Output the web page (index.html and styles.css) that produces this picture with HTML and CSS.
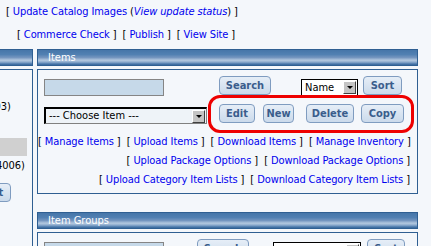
FILE: index.html
```html
<!DOCTYPE html>
<html>
<head>
<meta charset="utf-8">
<link rel="stylesheet" href="styles.css">
</head>
<body>
<div class="top">
  <div class="line1">[ <a class="lnk">Update Catalog Images</a> (<a class="lnk it">View update status</a>) ]</div>
  <div class="line2">[ <a class="lnk">Commerce Check</a> ] <span class="sp"></span>[ <a class="lnk">Publish</a> ] <span class="sp"></span>[ <a class="lnk">View Site</a> ]</div>
</div>
<div class="cols">
  <div class="leftcol">
    <div class="hdr"></div>
    <div class="lbody">
      <div class="lrow r1"><span>Categories (1003)</span></div>
      <div class="greybar"></div>
      <div class="lrow r2"><span>Default (4006)</span></div>
      <div class="lrow r3"><span class="btn l-sort">Sort</span></div>
    </div>
  </div>
  <div class="maincol">
    <section class="box">
      <div class="hdr"><span class="hdr-t">Items</span></div>
      <div class="body items">
        <div class="row row1">
          <div class="input"></div>
          <span class="btn b-search">Search</span>
          <div class="select sel-name"><span class="sel-t">Name</span><span class="arrow"></span></div>
          <span class="btn b-sort">Sort</span>
        </div>
        <div class="row row2">
          <div class="select sel-choose"><span class="sel-t">--- Choose Item ---</span><span class="arrow"></span></div>
          <span class="btn b-edit">Edit</span>
          <span class="btn b-new">New</span>
          <span class="btn b-delete">Delete</span>
          <span class="btn b-copy">Copy</span>
        </div>
        <div class="links">
          <div>[ <a class="lnk">Manage Items</a> ] <span class="sp"></span>[ <a class="lnk">Upload Items</a> ] <span class="sp"></span>[ <a class="lnk">Download Items</a> ] <span class="sp"></span>[ <a class="lnk">Manage Inventory</a> ]</div>
          <div>[ <a class="lnk">Upload Package Options</a> ] <span class="sp"></span>[ <a class="lnk">Download Package Options</a> ]</div>
          <div>[ <a class="lnk">Upload Category Item Lists</a> ] <span class="sp"></span>[ <a class="lnk">Download Category Item Lists</a> ]</div>
        </div>
        <div class="mark"></div>
      </div>
    </section>
    <section class="box groups">
      <div class="hdr"><span class="hdr-t">Item Groups</span></div>
      <div class="body gbody">
        <div class="row grow">
          <div class="input"></div>
          <span class="btn g-search">Search</span>
          <div class="select sel-gname"><span class="sel-t">Name</span><span class="arrow"></span></div>
          <span class="btn g-sort">Sort</span>
        </div>
      </div>
    </section>
  </div>
</div>
</body>
</html>
```
FILE: styles.css
```css
html, body { margin: 0; padding: 0; }
body {
  background: #f4f7fb;
  font-family: "DejaVu Sans Condensed", "DejaVu Sans", sans-serif;
  font-stretch: condensed;
  font-size: 11px;
  line-height: 14px;
  color: #000;
  overflow: hidden;
  height: 246px;
}
.lnk { color: #0000ee; }
.it { font-style: italic; }
.sp { display: inline-block; width: 3px; }
.top, .links { letter-spacing: -0.1px; }
.top .line1 { margin-top: 5px; padding-left: 6px; }
.top .line2 { margin-top: 9px; padding-left: 17px; }

.cols { display: flex; margin-top: 7px; align-items: flex-start; }
.leftcol { width: 33px; overflow: hidden; flex: none; }
.maincol { width: 381px; margin-left: 4px; flex: none; }

.hdr {
  height: 15px;
  border: 1px solid #2f5f92;
  background: linear-gradient(#4676a9 0%, #5180b2 30%, #7495bf 50%, #b3c8df 68%, #8fadcf 80%, #4f7cad 92%, #36659a 100%);
  color: #fff;
  line-height: 15px;
}
.leftcol .hdr { border-left: none; }
.hdr-t { padding-left: 10px; }

.lbody {
  margin-top: 3px;
  border-right: 1px solid #2f5f92;
  border-top: 1px solid #2f5f92;
  height: 200px;
  display: flex;
  flex-direction: column;
}
.lrow { display: flex; justify-content: flex-end; white-space: nowrap; }
.lrow.r1 { margin-top: 30px; padding-right: 21px; }
.greybar { height: 18px; background: #d0d0d0; margin-right: 5px; margin-top: 24px; }
.lrow.r2 { margin-top: 3px; padding-right: 7px; }
.lrow.r3 { margin-top: 10px; padding-right: 21px; }
.l-sort { width: 39px; flex: none; height: 21px; }

.body {
  margin-top: 3px;
  border: 1px solid #2f5f92;
  position: relative;
}
.items { height: 123px; }
.gbody { height: 60px; }
.groups { margin-top: 18px; }

.row { display: flex; align-items: flex-start; padding-left: 6px; }
.row1 { margin-top: 6px; }
.input {
  width: 118px; height: 15px;
  background: #c6d9e9;
  border: 1px solid #858585;
  margin-top: 3px;
}
.btn {
  display: inline-flex; align-items: center; justify-content: center;
  box-sizing: border-box;
  height: 19px;
  border: 1px solid #7f9cc0;
  border-radius: 4px;
  background: linear-gradient(#e6eef7, #cbdaeb);
  color: #3a5d8c;
  font-weight: bold;
  font-size: 11px;
  line-height: 17px;
}
.b-search { width: 52px; margin-left: 55px; }
.b-sort { width: 39px; margin-left: 5px; }

.select {
  box-sizing: border-box;
  display: flex; align-items: center;
  border: 1px solid #000;
  background: #fff;
  position: relative;
}
.sel-t { padding-left: 3px; flex: 1; white-space: nowrap; }
.arrow {
  width: 13px; height: 13px; box-sizing: border-box;
  margin-right: 1px;
  background: #c4c4c4;
  border: 1px solid;
  border-color: #fff #404040 #404040 #fff;
  display: flex; align-items: center; justify-content: center;
}
.arrow::after {
  content: ""; width: 0; height: 0;
  border-left: 3px solid transparent; border-right: 3px solid transparent;
  border-top: 3px solid #000;
}
.sel-name { width: 57px; height: 17px; margin-left: 30px; margin-top: 3px; }
.sel-choose {
  width: 163px; height: 17px; margin-top: 3px;
  background: #eef3f8;
  border-width: 2px 1px 1px 2px;
  border-color: #000 #808080 #808080 #000;
}
.row2 { margin-top: 8px; }
.b-edit { width: 36px; margin-left: 12px; }
.b-new { width: 31px; margin-left: 8px; }
.b-delete { width: 48px; margin-left: 12px; }
.b-copy { width: 43px; margin-left: 7px; }

.links { margin-top: 11px; padding-right: 7px; text-align: right; }
.links div { margin-bottom: 5px; white-space: nowrap; }

.mark {
  position: absolute;
  left: 170px; top: 25px;
  width: 200px; height: 32px;
  border: 3px solid #ee0000;
  border-radius: 12px;
}

.grow { margin-top: 6px; }
.g-search { width: 52px; margin-left: 33px; }
.sel-gname { width: 88px; height: 17px; margin-left: 24px; margin-top: 3px; }
.g-sort { width: 38px; margin-left: 6px; }
```
